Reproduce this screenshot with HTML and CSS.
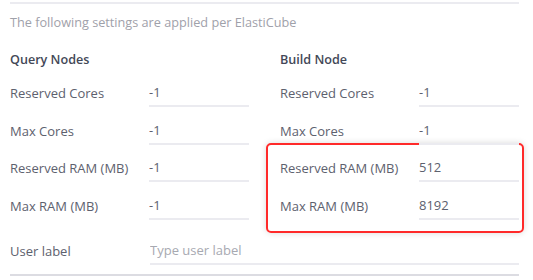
FILE: index.html
```html
<!DOCTYPE html>
<html lang="en">
<head>
    <meta charset="UTF-8">
    <title>ElastiCube Settings</title>
    <link rel="stylesheet" href="styles.css">
</head>
<body>
    <div class="panel">
        <p class="intro">The following settings are applied per ElastiCube</p>

        <div class="columns">
            <div class="col">
                <h4 class="col-title">Query Nodes</h4>
                <div class="field"><label>Reserved Cores</label><input class="val" value="-1"></div>
                <div class="field"><label>Max Cores</label><input class="val" value="-1"></div>
                <div class="field"><label>Reserved RAM (MB)</label><input class="val" value="-1"></div>
                <div class="field"><label>Max RAM (MB)</label><input class="val" value="-1"></div>
            </div>
            <div class="col">
                <h4 class="col-title">Build Node</h4>
                <div class="field"><label>Reserved Cores</label><input class="val" value="-1"></div>
                <div class="field"><label>Max Cores</label><input class="val" value="-1"></div>
                <div class="highlight">
                    <div class="field"><label>Reserved RAM (MB)</label><input class="val" value="512"></div>
                    <div class="field"><label>Max RAM (MB)</label><input class="val" value="8192"></div>
                </div>
            </div>
        </div>

        <div class="field user-row">
            <label>User label</label>
            <input class="val wide" placeholder="Type user label">
        </div>
    </div>
</body>
</html>
```

FILE: styles.css
```css
* {
    margin: 0;
    padding: 0;
    box-sizing: border-box;
}

body {
    font-family: 'Open Sans', 'Noto Sans', sans-serif;
    background: #ffffff;
    color: #5d616e;
    font-size: 13px;
}

.panel {
    margin: 2px 14px 0 10px;
    border-top: 2px solid #ebebf0;
    border-bottom: 2px solid #dcdce2;
    padding-bottom: 9px;
}

.intro {
    color: #9fa1aa;
    font-size: 12.7px;
    padding-top: 9px;
    height: 37px;
}

.columns {
    display: flex;
    gap: 31px;
}

.col {
    width: 239px;
}

.col-title {
    font-size: 12.6px;
    font-weight: 600;
    color: #434857;
    height: 28.5px;
    padding-top: 10px;
}

.field {
    display: flex;
    align-items: flex-end;
    height: 37.5px;
}

.field label {
    width: 140px;
    padding-bottom: 5px;
}

.val {
    width: 100px;
    border: none;
    border-bottom: 2px solid #ebebf0;
    font-family: inherit;
    font-size: 13px;
    color: #5d616e;
    padding: 0 0 4px 0;
    outline: none;
    background: transparent;
}

.val::placeholder {
    color: #a7a9b1;
}

.val.wide {
    width: 369px;
}

.highlight {
    margin: -2px -5px 0 -14px;
    padding: 0 3px 11px 12px;
    border: 2px solid #ff2a2a;
    border-radius: 5px;
    box-shadow: 0 0 6px rgba(0, 0, 0, 0.15);
}

.user-row {
    margin-top: -5.5px;
}
```
